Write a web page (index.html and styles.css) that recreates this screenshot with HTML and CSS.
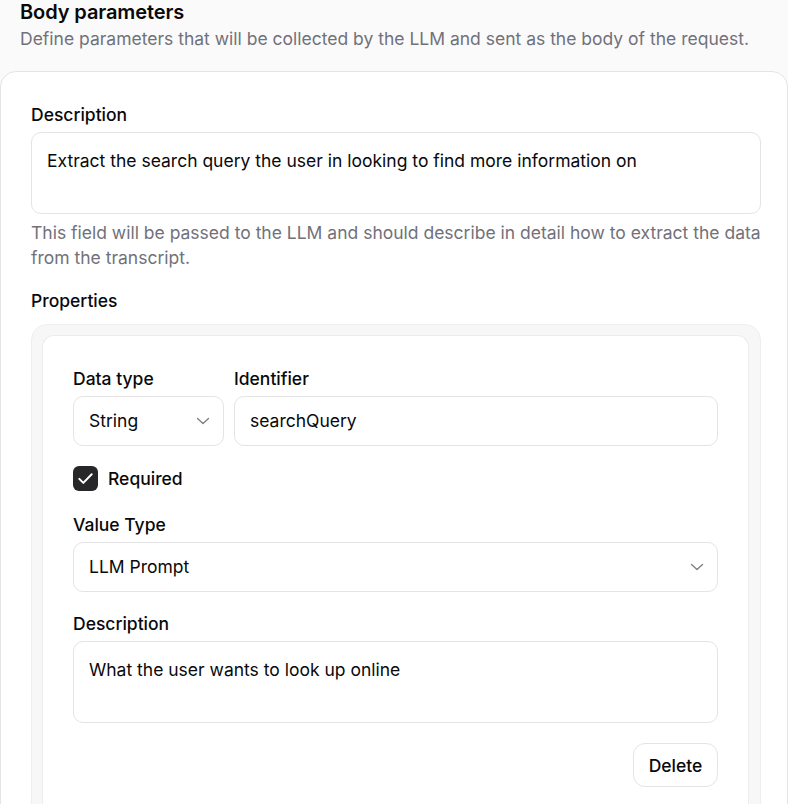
FILE: index.html
```html
<!DOCTYPE html>
<html lang="en">
<head>
<meta charset="utf-8">
<title>Body parameters</title>
<link rel="stylesheet" href="styles.css">
</head>
<body>
<div class="page">
  <header class="head">
    <h2 class="title">Body parameters</h2>
    <p class="subtitle">Define parameters that will be collected by the LLM and sent as the body of the request.</p>
  </header>
  <section class="card">
    <label class="label">Description</label>
    <div class="textarea">Extract the search query the user in looking to find more information on</div>
    <p class="help">This field will be passed to the LLM and should describe in detail how to extract the data from the transcript.</p>

    <label class="label props-label">Properties</label>
    <div class="props">
      <div class="prop">
        <div class="row">
          <div class="field">
            <label class="label">Data type</label>
            <div class="select">
              <span>String</span>
              <svg class="chev" width="14" height="8" viewBox="0 0 14 8"><path d="M1.5 1.5l5.5 5 5.5-5" fill="none" stroke="#808080" stroke-width="1.4" stroke-linecap="round" stroke-linejoin="round"/></svg>
            </div>
          </div>
          <div class="field">
            <label class="label">Identifier</label>
            <div class="input">searchQuery</div>
          </div>
        </div>
        <div class="check">
          <span class="box"><svg width="25" height="25" viewBox="0 0 25 25"><path d="M6.3 12.9l4 4 8.4-8.6" fill="none" stroke="#fff" stroke-width="2" stroke-linecap="round" stroke-linejoin="round"/></svg></span>
          <span class="check-text">Required</span>
        </div>
        <div class="group value-group">
          <label class="label">Value Type</label>
          <div class="select">
            <span>LLM Prompt</span>
            <svg class="chev" width="14" height="8" viewBox="0 0 14 8"><path d="M1.5 1.5l5.5 5 5.5-5" fill="none" stroke="#808080" stroke-width="1.4" stroke-linecap="round" stroke-linejoin="round"/></svg>
          </div>
        </div>
        <div class="group">
          <label class="label">Description</label>
          <div class="textarea">What the user wants to look up online</div>
        </div>
        <div class="actions">
          <button class="btn" type="button">Delete</button>
        </div>
      </div>
    </div>
  </section>
</div>
</body>
</html>
```

FILE: styles.css
```css
* { box-sizing: border-box; }
html, body { margin: 0; padding: 0; }
body {
  background: #fafafa;
  font-family: Inter, "Noto Sans", sans-serif;
  font-size: 17.5px;
  line-height: 24px;
  color: #09090b;
  width: 788px;
  height: 804px;
  overflow: hidden;
}
.head { padding: 0 0 0 20px; }
.title {
  margin: 0;
  font-size: 20px;
  line-height: 24px;
  font-weight: 600;
  letter-spacing: -0.1px;
}
.subtitle {
  margin: 3px 0 0;
  color: #71717a;
}
.card {
  margin-top: 20px;
  width: 788px;
  background: #fff;
  border: 1px solid #e4e4e7;
  border-radius: 16px;
  padding: 31px 26px 0 30px;
  display: flex;
  flex-direction: column;
  min-height: 760px;
}
.label {
  display: block;
  font-weight: 500;
  margin-bottom: 5px;
}
.textarea {
  height: 82px;
  border: 1px solid #e4e4e7;
  border-radius: 10px;
  padding: 16px 15px 14px;
  background: #fff;
}
.help {
  margin: 6px 0 0;
  color: #71717a;
  line-height: 25px;
}
.props-label { margin-top: 19px; margin-bottom: 11px; }
.props {
  background: #f7f7f7;
  border: 1px solid #efefef;
  border-radius: 16px;
  padding: 10px 11px 0 10px;
}
.prop {
  background: #fff;
  border: 1px solid #ececec;
  border-bottom: none;
  border-radius: 12px 12px 0 0;
  padding: 31px 30px 40px 30px;
  display: flex;
  flex-direction: column;
  gap: 20px;
}
.value-group { margin-top: 2px; }
.row {
  display: grid;
  grid-template-columns: 151px 1fr;
  gap: 10px;
}
.select, .input {
  height: 50px;
  border: 1px solid #e4e4e7;
  border-radius: 10px;
  padding: 0 13px 0 15px;
  display: flex;
  align-items: center;
  justify-content: space-between;
  background: #fff;
}
.chev { flex: none; }
.check {
  display: flex;
  align-items: center;
  gap: 10px;
  height: 25px;
}
.box {
  width: 25px;
  height: 25px;
  border-radius: 6px;
  background: #27272a;
  display: flex;
  align-items: center;
  justify-content: center;
}
.check-text { font-weight: 500; }
.actions {
  display: flex;
  justify-content: flex-end;
}
.btn {
  width: 85px;
  height: 44px;
  border: 1px solid #e4e4e7;
  border-radius: 12px;
  background: #fff;
  font-family: inherit;
  font-size: 17.5px;
  font-weight: 500;
  color: #09090b;
  padding: 0;
}
```
